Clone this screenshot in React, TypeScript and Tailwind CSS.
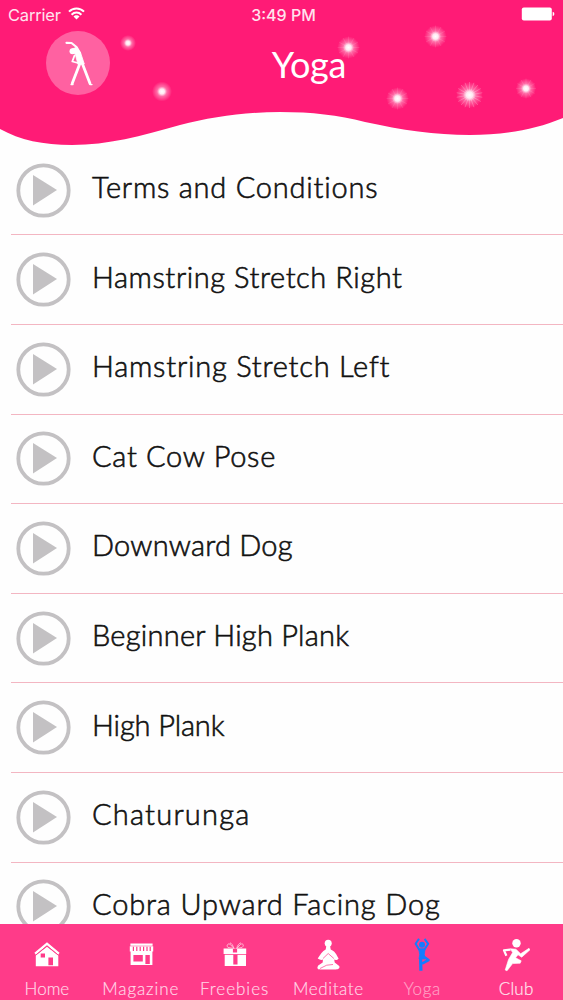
import type { ReactNode } from "react";

const poses = [
    { title: "Terms and Conditions", tracking: "tracking-[0.78px]" },
    { title: "Hamstring Stretch Right", tracking: "tracking-[0.57px]" },
    { title: "Hamstring Stretch Left", tracking: "tracking-[0.78px]" },
    { title: "Cat Cow Pose", tracking: "tracking-[0.7px]" },
    { title: "Downward Dog", tracking: "tracking-[0.22px]" },
    { title: "Beginner High Plank", tracking: "tracking-[0.25px]" },
    { title: "High Plank", tracking: "tracking-[-0.12px]" },
    { title: "Chaturunga", tracking: "tracking-[1.22px]" },
    { title: "Cobra Upward Facing Dog", tracking: "tracking-[0.85px]" },
];

const sparkles = [
    { x: 128, y: 43, r: 8, rays: 0 },
    { x: 162, y: 91.5, r: 10, rays: 0 },
    { x: 348.5, y: 47.5, r: 11, rays: 12 },
    { x: 435.5, y: 36.5, r: 11, rays: 12 },
    { x: 397.5, y: 98.5, r: 11, rays: 12 },
    { x: 469.5, y: 95, r: 13, rays: 18 },
    { x: 526, y: 88.5, r: 10, rays: 12 },
];

function Sparkle({ x, y, r, rays }: { x: number; y: number; r: number; rays: number }) {
    return (
        <g transform={`translate(${x} ${y})`}>
            <circle r={r} fill="url(#glow)" />
            {Array.from({ length: rays }, (_, i) => (
                <path
                    key={i}
                    d={`M0 4V${r}`}
                    transform={`rotate(${(i * 360) / rays})`}
                    stroke="#fff"
                    strokeOpacity={rays > 12 ? 0.26 : 0.12}
                    strokeWidth="0.8"
                />
            ))}
        </g>
    );
}

function Header() {
    return (
        <header className="relative h-[145.9px] shrink-0 font-[Inter,sans-serif] text-white">
            {/* Wave and sparkles */}
            <svg className="absolute inset-0" width="563" height="146" viewBox="0 0 563 146">
                <defs>
                    <radialGradient id="glow">
                        <stop offset="0" stopColor="#fff" />
                        <stop offset="0.25" stopColor="#fff" stopOpacity="0.9" />
                        <stop offset="0.5" stopColor="#fff" stopOpacity="0.35" />
                        <stop offset="1" stopColor="#fff" stopOpacity="0" />
                    </radialGradient>
                </defs>
                <path
                    d="M0 0H563V118C534 130 503 135 470 135C435 135 402 130 365 122C338 115 312 112 280 112C244 112 211 117 180 125C141 136 108 145 72 145C43 145 20 140 0 129Z"
                    fill="#ff1b76"
                />
                {sparkles.map((s) => (
                    <Sparkle key={s.x} {...s} />
                ))}
            </svg>

            {/* Status bar */}
            <div className="relative grid h-[30px] grid-cols-3 items-center pr-2 pl-2 text-[16.5px] text-[#ffe3ee]">
                <div className="flex items-center gap-[7px]">
                    <span className="tracking-[-0.2px]">Carrier</span>
                    <svg className="-mt-1" width="17" height="13" viewBox="0 0 17 13" fill="none" stroke="#fff" strokeWidth="2">
                        <path d="M1 4.7C5 .3 12 .3 16 4.7M3.6 7.7C6.4 4.8 10.6 4.8 13.4 7.7" />
                        <path d="M8.5 12.6L5.5 9.6C7 7.9 10 7.9 11.5 9.6Z" fill="#fff" stroke="none" />
                    </svg>
                </div>
                <div className="pl-1 text-center text-[16px] font-medium whitespace-nowrap">3:49 PM</div>
                <svg className="-mt-0.5 justify-self-end" width="34" height="14" viewBox="0 0 34 14" fill="#fff">
                    <rect x="0.8" y="0.5" width="30" height="13" rx="2" />
                    <path d="M31.7 4.8Q33.4 5.4 33.4 7T31.7 9.2Z" />
                </svg>
            </div>

            {/* Avatar and title */}
            <div className="relative grid h-[70px] grid-cols-3">
                <div className="mt-[0.5px] ml-[46px] flex size-16 items-center justify-center self-start rounded-full bg-[#ff61a1]">
                    <svg width="32" height="48" viewBox="0 0 32 48" fill="none" stroke="#fff" strokeLinecap="round" strokeLinejoin="round">
                        <path d="M4.5 3.8L9.5 4L14.5 8L18 14" strokeWidth="2.2" />
                        <circle cx="10.5" cy="12.2" r="3" fill="#fff" stroke="none" />
                        <path d="M10 10L14 8.5L18.5 13.5L22.3 25L16 25.5L13.5 16Z" fill="#fff" strokeWidth="0.8" />
                        <path d="M12.5 16.5L10.3 22.5L16 24" strokeWidth="1.8" />
                        <path d="M17.5 25.5L10.2 44.5M20.5 25L28 44.5" strokeWidth="2.8" />
                        <path d="M9 45.6H11M28 45.6H30" strokeWidth="1.4" />
                    </svg>
                </div>
                <h1 className="pt-[10px] pl-[55px] text-center font-[Lato,sans-serif] text-[36px] leading-[48px] tracking-[-0.3px]">
                    Yoga
                </h1>
            </div>
        </header>
    );
}

function PlayIcon() {
    return (
        <svg className="shrink-0" width="55" height="55" viewBox="0 0 55 55">
            <circle cx="27.5" cy="27.5" r="25.2" fill="none" stroke="#c3c1c3" strokeWidth="3.8" />
            <path d="M17 12V42.5L41 27Z" fill="#c3c1c3" />
        </svg>
    );
}

function HomeIcon() {
    return (
        <svg width="28" height="36" viewBox="0 0 28 36">
            <path d="M1.4 14.8L14 4.2L26.6 14.8L25.2 16.8L14 7.4L2.8 16.8Z" fill="#fff" />
            <path d="M2.8 17.5L14 8.7L25.3 17.5V28.3H2.8Z" fill="#fff" />
            <path d="M2.6 17.2L14 7.8L25.4 17.2" fill="none" stroke="#ff3b89" strokeWidth="0.9" />
            <path d="M7.7 15.5H12V19.4H7.7ZM15.4 19.6H20V27.3H15.4Z" fill="#ff3b89" />
        </svg>
    );
}

function ShopIcon() {
    return (
        <svg width="28" height="36" viewBox="0 0 28 36">
            <path d="M3.4 5.6H25.6V7.7H3.4ZM2.8 8.3H26.2V13.6H2.8ZM3.6 13.4H25.4V27H3.6Z" fill="#fff" />
            <path
                d="M6.4 8.8V13M9.8 8.8V13M13.2 8.8V13M16.6 8.8V13M20 8.8V13M23.2 8.8V13"
                stroke="#ff3b89"
                strokeWidth="1.2"
            />
            <path d="M6.4 17H15.8V23.6H6.4ZM18.4 17H22.8V26H18.4Z" fill="#ff3b89" />
        </svg>
    );
}

function GiftIcon() {
    return (
        <svg width="28" height="36" viewBox="0 0 28 36">
            <path d="M2.6 10.4H25.2V16H2.6ZM3.7 16.8H25V28H3.7Z" fill="#fff" />
            <path d="M11.9 10.4H16.1V14.5H11.9ZM12.3 16.4H16.5V26.6H12.3Z" fill="#ff3b89" />
            <path
                d="M13 10.4L7 9.5C5 7.5 7 5 9 6.2L13 10.4C12 7.5 10.5 5 9 4.9M15.7 10.4L21 9.5C23.5 7.5 22 5 19.7 6.2L15.7 10.4C16.5 7.5 18 5 20 4.9"
                fill="none"
                stroke="#ffc4da"
                strokeWidth="0.9"
            />
        </svg>
    );
}

function MeditateIcon() {
    return (
        <svg width="28" height="36" viewBox="0 0 28 36" fill="#fff">
            <circle cx="14.2" cy="5.2" r="3.5" />
            <path d="M12.5 7H15.9L16.7 11.5C20.7 13 22.2 16 24.6 20.5C23 22.7 21 22 20.2 21.5L20.7 24.5L25.2 28C26.2 30 24.5 31.4 22 31.4H6.3C3.3 31.4 2.7 30 4.2 27.5L8.7 24.5L8.9 21.5C7.2 22.5 5.7 21.5 3.7 20.5C6.7 16 8.2 13 11.7 11.5Z" />
            <path
                d="M9 20.5L14.2 15.5L19.9 20.5M6 30.5L12.7 27.2L19 26.5"
                fill="none"
                stroke="#ff3b89"
                strokeWidth="0.7"
            />
        </svg>
    );
}

function YogaIcon() {
    return (
        <svg width="28" height="36" viewBox="0 0 28 36" fill="none" stroke="#147cff" strokeLinejoin="round">
            <circle cx="14" cy="6.8" r="3" fill="#147cff" stroke="none" />
            <path d="M11 .8L7.6 5.8L11.2 11.6H16.4L20.2 5.8L16.6 .8" strokeWidth="2" />
            <path d="M10.8 11H17L16.3 16.5L17 21H11L11.7 16.5Z" fill="#147cff" strokeWidth="0.8" />
            <path d="M12.6 20L12.9 32.8" strokeWidth="3.2" />
            <path d="M15.5 18.5L20.5 22L14 25.6" strokeWidth="2.6" />
        </svg>
    );
}

function ClubIcon() {
    return (
        <svg width="28" height="36" viewBox="0 0 28 36" fill="none" stroke="#fff" strokeLinejoin="round">
            <circle cx="14.5" cy="5.2" r="4.2" fill="#fff" stroke="none" />
            <path d="M8.5 11.6L2 12.4L4.4 17.8" strokeWidth="2.2" />
            <path
                d="M8.3 10.8L14 11.2L18.6 15.8L27 10.3L28 11.8L19.7 19.2L16 16.8L13.6 19.8L19.2 22.8L18.2 25.2L10.6 25.6L5 32.8L3.2 32L6.5 21.5L10.6 14.6Z"
                fill="#fff"
                strokeWidth="0.6"
            />
        </svg>
    );
}

const tabs: { label: string; icon: ReactNode; text: string }[] = [
    { label: "Home", icon: <HomeIcon />, text: "text-[#ffd5e5] tracking-[0px]" },
    { label: "Magazine", icon: <ShopIcon />, text: "text-[#ffd5e5] tracking-[0.9px]" },
    { label: "Freebies", icon: <GiftIcon />, text: "text-[#ffd5e5] tracking-[1px]" },
    { label: "Meditate", icon: <MeditateIcon />, text: "text-[#ffd5e5] tracking-[0.6px]" },
    { label: "Yoga", icon: <YogaIcon />, text: "text-[#ffa0c5] tracking-[0.6px]" },
    { label: "Club", icon: <ClubIcon />, text: "text-[#ffe6ef] tracking-[0.2px]" },
];

export default function App() {
    return (
        <div className="flex h-[1000px] w-[563px] flex-col overflow-hidden bg-[#fefefe]">
            <Header />

            {/* Pose list */}
            <main className="min-h-0 flex-1 overflow-hidden">
                <ul>
                    {poses.map(({ title, tracking }) => (
                        <li key={title} className="ml-[11px] flex h-[89.6px] items-center border-b border-[#f3b6c2] pl-[5px]">
                            <PlayIcon />
                            <span
                                className={`-mt-[7px] ml-[21px] font-[Lato,sans-serif] text-[29px] font-light whitespace-nowrap text-[#111] [-webkit-text-stroke:0.6px_#111] ${tracking}`}
                            >
                                {title}
                            </span>
                        </li>
                    ))}
                </ul>
            </main>

            {/* Tab bar */}
            <nav className="grid h-[76.5px] shrink-0 grid-cols-6 bg-[#ff3b89]">
                {tabs.map(({ label, icon, text }) => (
                    <a key={label} className="flex flex-col items-center pt-[14px]">
                        {icon}
                        <span
                            className={`mt-[3px] font-[Lato,sans-serif] text-[17px] leading-6 font-light [-webkit-text-stroke:0.2px] ${text}`}
                        >
                            {label}
                        </span>
                    </a>
                ))}
            </nav>
        </div>
    );
}
